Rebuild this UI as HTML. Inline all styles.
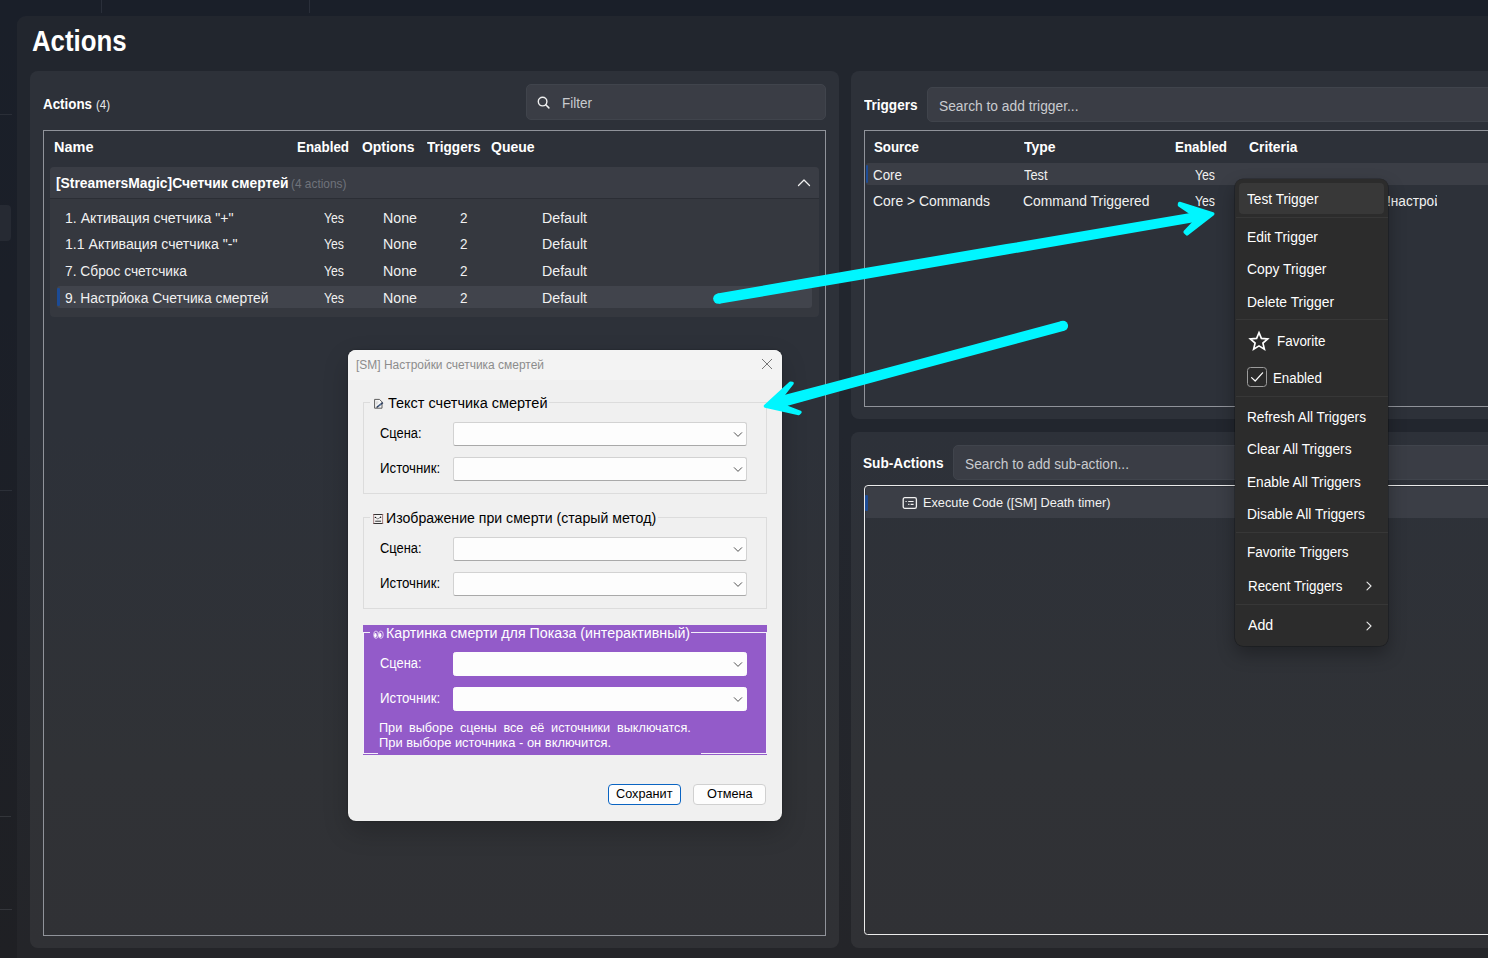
<!DOCTYPE html>
<html><head><meta charset="utf-8"><title>Actions</title>
<style>
html,body{margin:0;padding:0;}
body{width:1488px;height:958px;overflow:hidden;position:relative;background:#1a1f29;font-family:"Liberation Sans",sans-serif;}
div,span,svg{position:absolute;box-sizing:border-box;}
.t{white-space:nowrap;line-height:normal;transform-origin:0 50%;z-index:5;}
#main{left:17px;top:16px;width:1471px;height:942px;background:linear-gradient(180deg,#22262e 0px,#22262e 415px,#242529 942px);border-top-left-radius:9px;}
.panel{background:#2d3139;border-radius:8px;}
.input{background:#3a3d45;border-radius:5px;border:1px solid #40444c;}
.lbox{border:1px solid #90939a;}
.sep{background:#373737;height:1px;left:1235.5px;width:152.2px;z-index:26;}
.combo{background:#fdfdfd;border:1px solid #d2d2d2;border-bottom-color:#a9a9a9;border-radius:2.5px;left:453px;width:294px;height:24px;z-index:21;}
.gb{border:1px solid #dcdcdc;left:363px;width:404px;z-index:21;}
.chev{z-index:22;}

</style></head><body>
<!-- chrome -->
<div style="left:0;top:0;width:1488px;height:16px;background:#1a1f29;"></div>
<div style="left:101px;top:0;width:1px;height:12.5px;background:#2a2f3a;"></div>
<div style="left:309px;top:0;width:1px;height:12.5px;background:#2a2f3a;"></div>
<div style="left:0;top:16px;width:17px;height:942px;background:linear-gradient(#1a1f29 0%,#1b1f28 30%,#1f2024 100%);"></div>
<div style="left:0;top:114px;width:12px;height:1px;background:#2a2e37;"></div>
<div style="left:0;top:490px;width:12px;height:1px;background:#2c3038;"></div>
<div style="left:0;top:816px;width:11px;height:1px;background:#33353a;"></div>
<div style="left:0;top:909px;width:12px;height:1px;background:#34363b;"></div>
<div style="left:0;top:205px;width:11px;height:36px;background:#262a33;border-radius:0 4px 4px 0;"></div>
<div id="main"></div>

<!-- left panel -->
<div class="panel" style="left:30px;top:71px;width:809px;height:877px;background:linear-gradient(180deg,#2d3139 0px,#2d3139 360px,#303236 695px,#303135 877px);"></div>
<div class="input" style="left:526px;top:84px;width:300px;height:36px;"></div>
<svg style="left:536px;top:95px;" width="16" height="16" viewBox="0 0 16 16"><circle cx="6.6" cy="6.6" r="4.3" fill="none" stroke="#f0f0f0" stroke-width="1.4"/><path d="M9.8 9.8 L12.9 12.9" stroke="#f0f0f0" stroke-width="1.5" stroke-linecap="round"/></svg>
<div class="lbox" style="left:43px;top:130px;width:783px;height:806px;"></div>
<div style="left:50px;top:167px;width:769px;height:150px;background:#35383f;border-radius:4px;"></div>
<div style="left:50px;top:167px;width:769px;height:32px;background:#3a3d45;border-radius:4px 4px 0 0;border-bottom:1px solid #2b2e35;"></div>
<svg style="left:796px;top:177px;" width="16" height="12" viewBox="0 0 16 12"><path d="M2.5 8.5 L8 3 L13.5 8.5" fill="none" stroke="#f0f0f0" stroke-width="1.3" stroke-linecap="round" stroke-linejoin="round"/></svg>
<div style="left:57px;top:286px;width:755px;height:22px;background:#41444c;border-radius:3px;"></div>
<div style="left:57.2px;top:288px;width:2.7px;height:18px;background:#1c4b95;border-radius:1.3px;"></div>

<!-- triggers panel -->
<div class="panel" style="left:851px;top:71px;width:660px;height:348px;"></div>
<div class="input" style="left:927px;top:87px;width:600px;height:35px;"></div>
<div class="lbox" style="left:864px;top:130px;width:660px;height:277px;"></div>
<div style="left:866px;top:163px;width:640px;height:22px;background:#3b3e46;border-radius:2px;"></div>
<div style="left:865.8px;top:165px;width:2.4px;height:18px;background:#1c4b95;border-radius:1.1px;"></div>
<div style="left:1386px;top:190px;width:51.2px;height:24px;overflow:hidden;z-index:5;"><span style="left:0.7px;top:3.0px;font-size:14px;color:#f1f1f1;white-space:nowrap;transform-origin:0 50%;transform:scaleX(0.975);">!настрой</span></div>

<!-- sub-actions panel -->
<div class="panel" style="left:851px;top:432px;width:660px;height:516px;background:linear-gradient(180deg,#2d3139 0px,#303236 334px,#303135 516px);"></div>
<div class="input" style="left:953px;top:445px;width:600px;height:35px;"></div>
<div style="left:864px;top:485px;width:660px;height:450px;border:1.3px solid #ebebeb;border-radius:4px 0 0 3.5px;"></div>
<div style="left:866px;top:487px;width:640px;height:31px;background:#3b3e46;"></div>
<div style="left:865.4px;top:495px;width:2.4px;height:16px;background:#1c4b95;border-radius:1.1px;"></div>
<svg style="left:902px;top:496px;" width="16" height="14" viewBox="0 0 16 14"><rect x="1.2" y="1.7" width="13.2" height="10.6" rx="1.6" fill="none" stroke="#f1f1f1" stroke-width="1.3"/><path d="M3.5 5.5h1.2 M6.2 5.5h5.4 M6.2 8.3h1.2 M8.6 8.3h3" stroke="#f1f1f1" stroke-width="1.2"/></svg>

<!-- arrows -->
<svg style="left:0;top:0;z-index:24;" width="1488" height="958" viewBox="0 0 1488 958">
 <g fill="#00f6ff">
  <circle cx="718.3" cy="298.6" r="5.15"/><polygon points="719.2,303.7 863.7,279.3 1008.2,254.3 1200.8,221.0 1199.2,211.6 1006.4,244.1 861.9,268.5 717.4,293.5"/>
  <circle cx="1063" cy="325.8" r="5.1"/><polygon points="1061.7,320.9 919.2,359.2 833.6,382.0 799.4,391.0 776.5,396.9 779.5,408.1 802.2,401.7 836.4,392.3 921.8,369.1 1064.3,330.7"/>
 </g>
 <g fill="#00f6ff" stroke="#00f6ff" stroke-linejoin="round">
  <path stroke-width="3.4" d="M1179.6 203.4 L1212.8 213.8 L1187 233.9 L1185.1 232 L1194.8 221.6 L1192 213.6 L1179.4 205 Z"/>
  <path stroke-width="3" d="M790.5 382.9 L792.3 383.3 L783.5 394.6 L786.6 407 L800.2 412.2 L798.7 413.7 L765.2 406.2 Z"/>
 </g>
</svg>

<!-- dialog -->
<div style="left:348px;top:350px;width:434px;height:471px;background:#f0f0f0;border-radius:8px;box-shadow:0 10px 26px rgba(0,0,0,.20),0 0 1.5px rgba(0,0,0,.5);z-index:20;overflow:hidden;"><div style="left:0;top:0;width:434px;height:30px;background:#f3f3f3;"></div></div>
<svg style="left:761px;top:358px;z-index:22;" width="12" height="12" viewBox="0 0 12 12"><path d="M1 1 L11 11 M11 1 L1 11" stroke="#767676" stroke-width="1" fill="none"/></svg>
<!-- group 1 -->
<div class="gb" style="top:402px;height:92px;"></div>
<div style="left:370px;top:398px;width:179px;height:12px;background:#f0f0f0;z-index:21;"></div>
<svg style="left:373px;top:398px;z-index:22;" width="12" height="12" viewBox="0 0 12 12"><path d="M1.6 1.4h4.9l2.5 2.5v6.3h-7.4z" fill="#f6f6f6" stroke="#4d4d4d" stroke-width=".9"/><path d="M3 4.1h2.4M3 5.8h1.6" stroke="#b9b9b9" stroke-width=".7"/><path d="M4 9.1 L9.9 4.7" stroke="#30405e" stroke-width="1.5"/><path d="M3.3 9.9 L4.6 9.5 L3.8 8.6z" fill="#333"/><path d="M5.2 8.2 L8 6.1" stroke="#6f9bd0" stroke-width=".6"/></svg>
<div class="combo" style="top:422px;"></div>
<div class="combo" style="top:457px;"></div>
<!-- group 2 -->
<div class="gb" style="top:517px;height:92px;"></div>
<div style="left:370px;top:513px;width:288px;height:12px;background:#f0f0f0;z-index:21;"></div>
<svg style="left:372px;top:513px;z-index:22;" width="12" height="12" viewBox="0 0 12 12"><rect x="1.6" y="1.4" width="9" height="9.2" fill="#f5f5f5"/><path d="M1.2 1.5h9.9M1.2 10.5h9.9" stroke="#333" stroke-width="1.1"/><path d="M1.7 1v10M10.6 1v10" stroke="#9c6f6f" stroke-width=".9"/><path d="M3.2 4.3 L5.9 6 L8.9 3.9" stroke="#666" stroke-width=".8" fill="none"/><circle cx="3.4" cy="4.4" r=".7" fill="#111"/><circle cx="8.6" cy="4.2" r=".7" fill="#111"/><path d="M3.2 8.2h5.9" stroke="#1a1a1a" stroke-width=".9"/></svg>
<div class="combo" style="top:537px;"></div>
<div class="combo" style="top:572px;"></div>
<!-- group 3 purple -->
<div style="left:363px;top:625px;width:404px;height:130px;background:#935bc9;z-index:21;"></div>
<div style="left:363px;top:632px;width:404px;height:122px;border:1px solid #f4effa;z-index:21;"></div>
<div style="left:370px;top:628px;width:321px;height:12px;background:#935bc9;z-index:21;"></div>
<div style="left:378px;top:718px;width:323px;height:37px;background:#935bc9;z-index:21;"></div>
<svg style="left:372.6px;top:630.2px;z-index:22;" width="12" height="10" viewBox="0 0 12 10"><g fill="none" stroke="#f3ecfa" stroke-width=".75"><ellipse cx="3" cy="4.7" rx="2.3" ry="3.7"/><ellipse cx="7.9" cy="4.7" rx="2.3" ry="3.7"/></g><ellipse cx="2.4" cy="5.2" rx="1.25" ry="2.2" fill="#fff"/><ellipse cx="7.2" cy="5.2" rx="1.25" ry="2.2" fill="#fff"/></svg>
<div class="combo" style="top:652px;border-color:#fdfdfd;"></div>
<div class="combo" style="top:687px;border-color:#fdfdfd;"></div>
<!-- buttons -->
<div style="left:608px;top:784px;width:73px;height:21px;background:#fdfdfd;border:1.5px solid #0a64c2;border-radius:4px;z-index:21;"></div>
<div style="left:693px;top:784px;width:73px;height:21px;background:#fdfdfd;border:1px solid #d0d0d0;border-radius:4px;z-index:21;"></div>
<svg class="chev" style="left:733px;top:430px;" width="10" height="8" viewBox="0 0 10 8"><path d="M1 2.4 L5 6.4 L9 2.4" fill="none" stroke="#474747" stroke-width="0.95"/></svg>
<svg class="chev" style="left:733px;top:465px;" width="10" height="8" viewBox="0 0 10 8"><path d="M1 2.4 L5 6.4 L9 2.4" fill="none" stroke="#474747" stroke-width="0.95"/></svg>
<svg class="chev" style="left:733px;top:545px;" width="10" height="8" viewBox="0 0 10 8"><path d="M1 2.4 L5 6.4 L9 2.4" fill="none" stroke="#474747" stroke-width="0.95"/></svg>
<svg class="chev" style="left:733px;top:580px;" width="10" height="8" viewBox="0 0 10 8"><path d="M1 2.4 L5 6.4 L9 2.4" fill="none" stroke="#474747" stroke-width="0.95"/></svg>
<svg class="chev" style="left:733px;top:660px;" width="10" height="8" viewBox="0 0 10 8"><path d="M1 2.4 L5 6.4 L9 2.4" fill="none" stroke="#474747" stroke-width="0.95"/></svg>
<svg class="chev" style="left:733px;top:695px;" width="10" height="8" viewBox="0 0 10 8"><path d="M1 2.4 L5 6.4 L9 2.4" fill="none" stroke="#474747" stroke-width="0.95"/></svg>
<!-- context menu -->
<div style="left:1235px;top:178.5px;width:153.1px;height:467px;background:#2c2c2c;border-radius:8px;box-shadow:0 0 0 .6px rgba(0,0,0,.35),0 8px 18px rgba(0,0,0,.30);z-index:25;"></div>
<div style="left:1239px;top:183px;width:145px;height:31px;background:#383838;border-radius:4px;z-index:26;"></div>
<div class="sep" style="top:217px;"></div>
<div class="sep" style="top:319px;"></div>
<div class="sep" style="top:396px;"></div>
<div class="sep" style="top:532px;"></div>
<div class="sep" style="top:604px;"></div>
<svg style="left:1248px;top:330px;z-index:27;" width="22" height="22" viewBox="0 0 22 22"><path d="M11 2.6 L13.4 8.4 L19.7 8.9 L14.9 13 L16.4 19.2 L11 15.9 L5.6 19.2 L7.1 13 L2.3 8.9 L8.6 8.4 Z" fill="none" stroke="#ffffff" stroke-width="1.65" stroke-linejoin="miter"/></svg>
<div style="left:1247px;top:367px;width:20px;height:20px;border:1px solid #9c9c9c;border-radius:3.5px;z-index:27;background:#2a2a2a;"></div>
<svg style="left:1247px;top:367px;z-index:28;" width="20" height="20" viewBox="0 0 20 20"><path d="M4.6 10.6 L8.2 14 L15.6 5.8" fill="none" stroke="#ffffff" stroke-width="1.2" stroke-linecap="round" stroke-linejoin="round"/></svg>
<svg style="left:1365px;top:581px;z-index:27;" width="8" height="10" viewBox="0 0 8 10"><path d="M2 1.2 L6 5 L2 8.8" fill="none" stroke="#e8e8e8" stroke-width="1.1" stroke-linecap="round" stroke-linejoin="round"/></svg>
<svg style="left:1365px;top:621px;z-index:27;" width="8" height="10" viewBox="0 0 8 10"><path d="M2 1.2 L6 5 L2 8.8" fill="none" stroke="#e8e8e8" stroke-width="1.1" stroke-linecap="round" stroke-linejoin="round"/></svg>

<span class="t" id="t0" style="left:31.5px;top:25.25px;font-size:29px;font-weight:700;color:#ffffff;transform:scaleX(0.8886);">Actions</span>
<span class="t" id="t1" style="left:42.5px;top:95.42px;font-size:15px;font-weight:700;color:#ffffff;transform:scaleX(0.8907);">Actions</span>
<span class="t" id="t2" style="left:95.5px;top:97.23px;font-size:13px;font-weight:400;color:#e8e8e8;transform:scaleX(0.8810);">(4)</span>
<span class="t" id="t3" style="left:561.5px;top:95.33px;font-size:14px;font-weight:400;color:#c9cbcf;transform:scaleX(0.9639);">Filter</span>
<span class="t" id="t4" style="left:53.5px;top:139.33px;font-size:14px;font-weight:700;color:#ffffff;transform:scaleX(1.0356);">Name</span>
<span class="t" id="t5" style="left:297.0px;top:139.33px;font-size:14px;font-weight:700;color:#ffffff;transform:scaleX(0.9547);">Enabled</span>
<span class="t" id="t6" style="left:361.5px;top:139.33px;font-size:14px;font-weight:700;color:#ffffff;transform:scaleX(0.9926);">Options</span>
<span class="t" id="t7" style="left:426.5px;top:139.33px;font-size:14px;font-weight:700;color:#ffffff;transform:scaleX(0.9683);">Triggers</span>
<span class="t" id="t8" style="left:491.0px;top:139.33px;font-size:14px;font-weight:700;color:#ffffff;">Queue</span>
<span class="t" id="t9" style="left:55.5px;top:175.33px;font-size:14px;font-weight:700;color:#ffffff;transform:scaleX(0.9886);">[StreamersMagic]Счетчик смертей</span>
<span class="t" id="t10" style="left:290.5px;top:176.24px;font-size:13px;font-weight:400;color:#6f737b;transform:scaleX(0.9143);">(4 actions)</span>
<span class="t" id="t11" style="left:64.5px;top:209.83px;font-size:14px;font-weight:400;color:#f1f1f1;transform:scaleX(1.0089);">1. Активация счетчика "+"</span>
<span class="t" id="t12" style="left:324.0px;top:209.83px;font-size:14px;font-weight:400;color:#f1f1f1;transform:scaleX(0.8755);">Yes</span>
<span class="t" id="t13" style="left:382.5px;top:209.83px;font-size:14px;font-weight:400;color:#f1f1f1;transform:scaleX(1.0159);">None</span>
<span class="t" id="t14" style="left:460.0px;top:209.83px;font-size:14px;font-weight:400;color:#f1f1f1;transform:scaleX(0.9619);">2</span>
<span class="t" id="t15" style="left:541.5px;top:209.83px;font-size:14px;font-weight:400;color:#f1f1f1;transform:scaleX(1.0144);">Default</span>
<span class="t" id="t16" style="left:64.5px;top:236.33px;font-size:14px;font-weight:400;color:#f1f1f1;transform:scaleX(1.0071);">1.1 Активация счетчика "-"</span>
<span class="t" id="t17" style="left:324.0px;top:236.33px;font-size:14px;font-weight:400;color:#f1f1f1;transform:scaleX(0.8755);">Yes</span>
<span class="t" id="t18" style="left:382.5px;top:236.33px;font-size:14px;font-weight:400;color:#f1f1f1;transform:scaleX(1.0159);">None</span>
<span class="t" id="t19" style="left:460.0px;top:236.33px;font-size:14px;font-weight:400;color:#f1f1f1;transform:scaleX(0.9619);">2</span>
<span class="t" id="t20" style="left:541.5px;top:236.33px;font-size:14px;font-weight:400;color:#f1f1f1;transform:scaleX(1.0144);">Default</span>
<span class="t" id="t21" style="left:64.5px;top:262.83px;font-size:14px;font-weight:400;color:#f1f1f1;transform:scaleX(0.9835);">7. Сброс счетсчика</span>
<span class="t" id="t22" style="left:324.0px;top:262.83px;font-size:14px;font-weight:400;color:#f1f1f1;transform:scaleX(0.8755);">Yes</span>
<span class="t" id="t23" style="left:382.5px;top:262.83px;font-size:14px;font-weight:400;color:#f1f1f1;transform:scaleX(1.0159);">None</span>
<span class="t" id="t24" style="left:460.0px;top:262.83px;font-size:14px;font-weight:400;color:#f1f1f1;transform:scaleX(0.9619);">2</span>
<span class="t" id="t25" style="left:541.5px;top:262.83px;font-size:14px;font-weight:400;color:#f1f1f1;transform:scaleX(1.0144);">Default</span>
<span class="t" id="t26" style="left:64.5px;top:289.83px;font-size:14px;font-weight:400;color:#f1f1f1;transform:scaleX(0.9862);">9. Настрйока Счетчика смертей</span>
<span class="t" id="t27" style="left:324.0px;top:289.83px;font-size:14px;font-weight:400;color:#f1f1f1;transform:scaleX(0.8755);">Yes</span>
<span class="t" id="t28" style="left:382.5px;top:289.83px;font-size:14px;font-weight:400;color:#f1f1f1;transform:scaleX(1.0159);">None</span>
<span class="t" id="t29" style="left:460.0px;top:289.83px;font-size:14px;font-weight:400;color:#f1f1f1;transform:scaleX(0.9619);">2</span>
<span class="t" id="t30" style="left:541.5px;top:289.83px;font-size:14px;font-weight:400;color:#f1f1f1;transform:scaleX(1.0144);">Default</span>
<span class="t" id="t31" style="left:863.5px;top:97.33px;font-size:14px;font-weight:700;color:#ffffff;transform:scaleX(0.9683);">Triggers</span>
<span class="t" id="t32" style="left:938.5px;top:98.33px;font-size:14px;font-weight:400;color:#c9cbcf;transform:scaleX(0.9849);">Search to add trigger...</span>
<span class="t" id="t33" style="left:874.0px;top:139.33px;font-size:14px;font-weight:700;color:#ffffff;transform:scaleX(0.9480);">Source</span>
<span class="t" id="t34" style="left:1023.5px;top:139.33px;font-size:14px;font-weight:700;color:#ffffff;transform:scaleX(0.9956);">Type</span>
<span class="t" id="t35" style="left:1174.5px;top:139.33px;font-size:14px;font-weight:700;color:#ffffff;transform:scaleX(0.9547);">Enabled</span>
<span class="t" id="t36" style="left:1249.2px;top:139.33px;font-size:14px;font-weight:700;color:#ffffff;transform:scaleX(0.9892);">Criteria</span>
<span class="t" id="t37" style="left:873.0px;top:166.83px;font-size:14px;font-weight:400;color:#f1f1f1;transform:scaleX(0.9552);">Core</span>
<span class="t" id="t38" style="left:1023.5px;top:166.83px;font-size:14px;font-weight:400;color:#f1f1f1;transform:scaleX(0.9148);">Test</span>
<span class="t" id="t39" style="left:1194.8px;top:166.83px;font-size:14px;font-weight:400;color:#f1f1f1;transform:scaleX(0.8755);">Yes</span>
<span class="t" id="t40" style="left:873.0px;top:193.03px;font-size:14px;font-weight:400;color:#f1f1f1;transform:scaleX(0.9924);">Core > Commands</span>
<span class="t" id="t41" style="left:1023.0px;top:193.03px;font-size:14px;font-weight:400;color:#f1f1f1;transform:scaleX(0.9912);">Command Triggered</span>
<span class="t" id="t42" style="left:1194.8px;top:193.03px;font-size:14px;font-weight:400;color:#f1f1f1;transform:scaleX(0.8755);">Yes</span>
<span class="t" id="t43" style="left:863.3px;top:455.33px;font-size:14px;font-weight:700;color:#ffffff;transform:scaleX(0.9763);">Sub-Actions</span>
<span class="t" id="t44" style="left:964.9px;top:456.33px;font-size:14px;font-weight:400;color:#c9cbcf;transform:scaleX(0.9801);">Search to add sub-action...</span>
<span class="t" id="t45" style="left:923.0px;top:495.24px;font-size:13px;font-weight:400;color:#f1f1f1;transform:scaleX(0.9793);">Execute Code ([SM] Death timer)</span>
<span class="t" id="t46" style="left:1246.5px;top:191.33px;font-size:14px;font-weight:400;color:#ffffff;transform:scaleX(0.9776);z-index:30;">Test Trigger</span>
<span class="t" id="t47" style="left:1246.5px;top:229.33px;font-size:14px;font-weight:400;color:#ffffff;transform:scaleX(0.9917);z-index:30;">Edit Trigger</span>
<span class="t" id="t48" style="left:1246.5px;top:261.33px;font-size:14px;font-weight:400;color:#ffffff;transform:scaleX(0.9918);z-index:30;">Copy Trigger</span>
<span class="t" id="t49" style="left:1246.5px;top:294.33px;font-size:14px;font-weight:400;color:#ffffff;transform:scaleX(0.9893);z-index:30;">Delete Trigger</span>
<span class="t" id="t50" style="left:1276.9px;top:332.53px;font-size:14px;font-weight:400;color:#ffffff;transform:scaleX(0.9589);z-index:30;">Favorite</span>
<span class="t" id="t51" style="left:1272.9px;top:370.33px;font-size:14px;font-weight:400;color:#ffffff;transform:scaleX(0.9496);z-index:30;">Enabled</span>
<span class="t" id="t52" style="left:1246.5px;top:409.33px;font-size:14px;font-weight:400;color:#ffffff;transform:scaleX(0.9740);z-index:30;">Refresh All Triggers</span>
<span class="t" id="t53" style="left:1246.5px;top:441.33px;font-size:14px;font-weight:400;color:#ffffff;transform:scaleX(0.9804);z-index:30;">Clear All Triggers</span>
<span class="t" id="t54" style="left:1246.5px;top:474.33px;font-size:14px;font-weight:400;color:#ffffff;transform:scaleX(0.9749);z-index:30;">Enable All Triggers</span>
<span class="t" id="t55" style="left:1246.5px;top:506.33px;font-size:14px;font-weight:400;color:#ffffff;transform:scaleX(0.9839);z-index:30;">Disable All Triggers</span>
<span class="t" id="t56" style="left:1246.9px;top:544.33px;font-size:14px;font-weight:400;color:#ffffff;transform:scaleX(0.9662);z-index:30;">Favorite Triggers</span>
<span class="t" id="t57" style="left:1247.8px;top:578.33px;font-size:14px;font-weight:400;color:#ffffff;transform:scaleX(0.9562);z-index:30;">Recent Triggers</span>
<span class="t" id="t58" style="left:1247.8px;top:617.33px;font-size:14px;font-weight:400;color:#ffffff;transform:scaleX(1.0112);z-index:30;">Add</span>
<span class="t" id="t59" style="left:356.1px;top:357.74px;font-size:12px;font-weight:400;color:#8c8c8c;transform:scaleX(0.9967);z-index:22;">[SM] Настройки счетчика смертей</span>
<span class="t" id="t60" style="left:387.5px;top:395.33px;font-size:14px;font-weight:400;color:#000000;transform:scaleX(1.0358);z-index:22;">Текст счетчика смертей</span>
<span class="t" id="t61" style="left:386.3px;top:509.93px;font-size:14px;font-weight:400;color:#000000;transform:scaleX(1.0080);z-index:22;">Изображение при смерти (старый метод)</span>
<span class="t" id="t62" style="left:386.0px;top:624.63px;font-size:14px;font-weight:400;color:#ffffff;transform:scaleX(1.0158);z-index:22;">Картинка смерти для Показа (интерактивный)</span>
<span class="t" id="t63" style="left:379.9px;top:425.03px;font-size:14px;font-weight:400;color:#000000;transform:scaleX(0.9187);z-index:22;">Сцена:</span>
<span class="t" id="t64" style="left:379.9px;top:459.83px;font-size:14px;font-weight:400;color:#000000;transform:scaleX(0.9457);z-index:22;">Источник:</span>
<span class="t" id="t65" style="left:379.9px;top:540.03px;font-size:14px;font-weight:400;color:#000000;transform:scaleX(0.9187);z-index:22;">Сцена:</span>
<span class="t" id="t66" style="left:379.9px;top:574.83px;font-size:14px;font-weight:400;color:#000000;transform:scaleX(0.9457);z-index:22;">Источник:</span>
<span class="t" id="t67" style="left:379.9px;top:655.03px;font-size:14px;font-weight:400;color:#ffffff;transform:scaleX(0.9187);z-index:22;">Сцена:</span>
<span class="t" id="t68" style="left:379.9px;top:689.83px;font-size:14px;font-weight:400;color:#ffffff;transform:scaleX(0.9457);z-index:22;">Источник:</span>
<span class="t" id="t69" style="left:378.9px;top:720.24px;font-size:13px;font-weight:400;color:#ffffff;transform:scaleX(0.9735);z-index:22;word-spacing:3.4px;">При выборе сцены все её источники выключатся.</span>
<span class="t" id="t70" style="left:378.9px;top:735.44px;font-size:13px;font-weight:400;color:#ffffff;transform:scaleX(0.9930);z-index:22;">При выборе источника - он включится.</span>
<span class="t" id="t71" style="left:615.9px;top:785.98px;font-size:13.5px;font-weight:400;color:#000000;transform:scaleX(0.9407);z-index:22;">Сохранит</span>
<span class="t" id="t72" style="left:706.9px;top:785.98px;font-size:13.5px;font-weight:400;color:#000000;transform:scaleX(0.9435);z-index:22;">Отмена</span>
</body></html>
